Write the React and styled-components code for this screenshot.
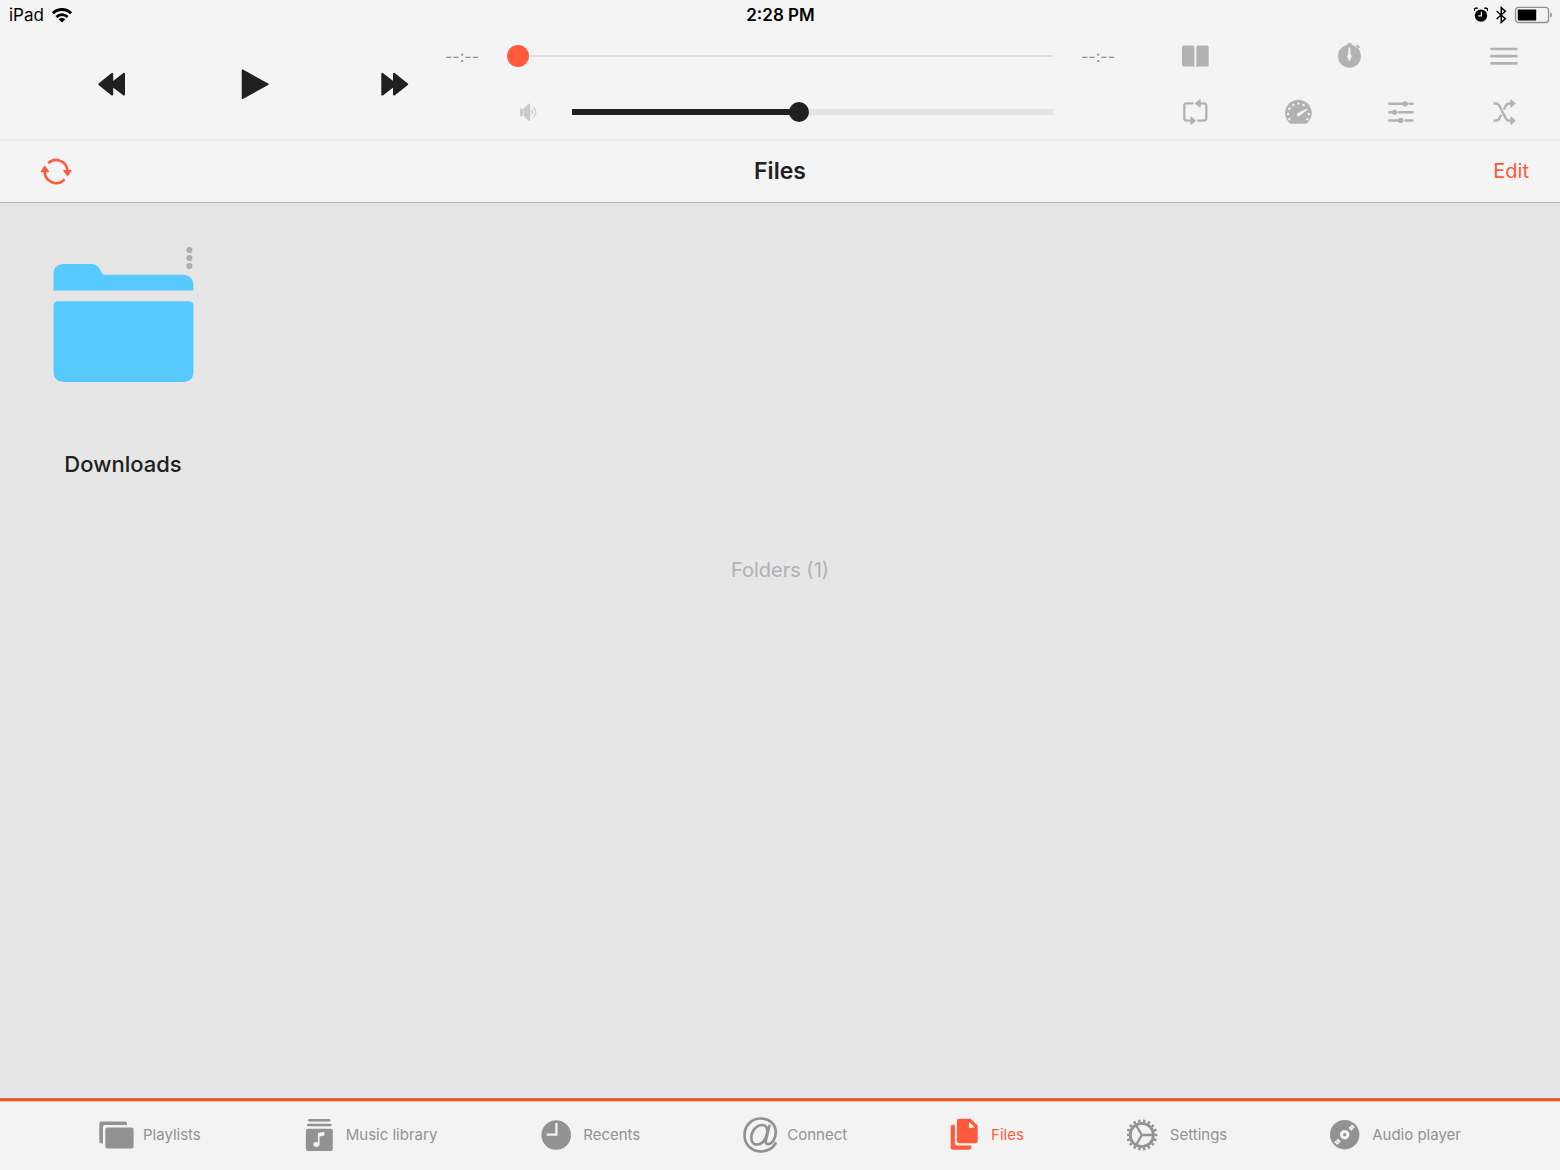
import React, { useState } from "react";
import styled, { createGlobalStyle } from "styled-components";

const GlobalStyle = createGlobalStyle`
  *, *::before, *::after { box-sizing: border-box; }
  body {
    margin: 0;
    background: #e6e6e6;
    color: #202020;
    font-family: Inter, "Liberation Sans", sans-serif;
  }
  svg { display: block; flex: none; }
`;

const Screen = styled.div`
  min-height: 100vh;
  display: flex;
  flex-direction: column;
`;

/* ---------- status bar ---------- */

const StatusBar = styled.div`
  display: grid;
  grid-template-columns: 1fr auto 1fr;
  align-items: center;
  height: 28px;
  padding: 1px 8px 0 9px;
  background: #f4f4f4;
  color: #000;
  font-size: 17px;
  line-height: 28px;
`;

const StatusGroup = styled.div`
  display: flex;
  align-items: center;
  justify-content: ${(p) => (p.$end ? "flex-end" : "flex-start")};
  gap: 7px;
`;

const Clock = styled.time`
  font-weight: 600;
`;

/* ---------- player ---------- */

const Player = styled.section`
  display: grid;
  grid-template-columns: 445px minmax(0, 1fr) 445px;
  height: 112px;
  background: #f4f4f4;
  box-shadow: inset 0 -1px #e9e9e9;
`;

const Transport = styled.div`
  display: flex;
  align-items: center;
  justify-content: space-between;
  padding: 0 33px 0 96px;
`;

const Rows = styled.div`
  display: grid;
  grid-template-rows: 56px 56px;
`;

const SeekRow = styled.div`
  display: flex;
  align-items: center;
  gap: 28px;
`;

const VolumeRow = styled.div`
  display: flex;
  align-items: center;
  gap: 35px;
  padding: 0 61px 0 74px;
`;

const TimeLabel = styled.span`
  width: 34px;
  color: #949494;
  font-size: 16px;
  line-height: 20px;
  white-space: nowrap;
`;

const ToolRow = styled.div`
  display: flex;
  align-items: center;
  justify-content: space-between;
  padding: 0 42px 0 66px;
`;

const IconButton = styled.button`
  display: flex;
  align-items: center;
  justify-content: center;
  flex: none;
  width: ${(p) => p.$width || 28}px;
  padding: 0;
  border: 0;
  background: none;
  color: ${(p) => p.$color || "#b2b2b2"};
  cursor: pointer;
`;

const Slider = styled.input`
  appearance: none;
  flex: 1;
  min-width: 0;
  height: 24px;
  margin: 0;
  background: none;
  cursor: pointer;

  &::-webkit-slider-runnable-track {
    height: ${(p) => p.$track}px;
    border-radius: ${(p) => (p.$rounded ? 1 : 0)}px;
    background: linear-gradient(
      to right,
      ${(p) => p.$color} ${(p) => p.value}%,
      ${(p) => (p.$rounded ? "#dfdfdf" : "#e5e5e6")} ${(p) => p.value}%
    );
  }
  &::-webkit-slider-thumb {
    appearance: none;
    width: ${(p) => p.$thumb}px;
    height: ${(p) => p.$thumb}px;
    margin-top: ${(p) => (p.$track - p.$thumb) / 2}px;
    border-radius: 50%;
    background: ${(p) => p.$color};
  }
`;

/* ---------- title bar ---------- */

const TitleBar = styled.header`
  display: grid;
  grid-template-columns: 1fr auto 1fr;
  align-items: center;
  height: 63px;
  padding: 0 31px;
  background: #f4f4f4;
  border-bottom: 1px solid #b4b4b4;
  box-shadow: inset 0 1px #ededed;
`;

const Title = styled.h1`
  margin: 0;
  font-size: 23px;
  font-weight: 600;
  line-height: 30px;
`;

const EditButton = styled.button`
  justify-self: end;
  padding: 0;
  border: 0;
  background: none;
  color: #ff5b3b;
  font: inherit;
  font-size: 20px;
  line-height: 28px;
  cursor: pointer;
`;

/* ---------- files ---------- */

const Content = styled.main`
  flex: 1;
  padding: 43px 53px;
`;

const FileGrid = styled.div`
  display: grid;
  grid-template-columns: repeat(auto-fill, 140px);
  gap: 40px;
`;

const FileItem = styled.article`
  position: relative;
  display: flex;
  flex-direction: column;
  align-items: center;
  padding-top: 18px;
`;

const MoreButton = styled.button`
  position: absolute;
  top: 0;
  right: 0;
  padding: 0;
  border: 0;
  background: none;
  cursor: pointer;
`;

const FileName = styled.h2`
  margin: 68px 0 0;
  font-size: 22px;
  font-weight: 500;
  line-height: 28px;
`;

const Summary = styled.p`
  margin: 78px 0 0;
  color: #b1b1b6;
  font-size: 20px;
  line-height: 28px;
  text-align: center;
`;

/* ---------- tab bar ---------- */

const TabBar = styled.nav`
  display: flex;
  align-items: center;
  justify-content: space-between;
  height: 72px;
  padding: 0 99px;
  background: #f3f3f3;
  border-top: 1px solid #c8755a;
  box-shadow: inset 0 2px #fa4f10, inset 0 3px #f9cfc1;
`;

const Tab = styled.button`
  display: flex;
  align-items: center;
  gap: 9px;
  padding: 0;
  border: 0;
  background: none;
  color: ${(p) => (p.$active ? "#ff5b3b" : "#929292")};
  font: inherit;
  font-size: 15px;
  line-height: 20px;
  white-space: nowrap;
  cursor: pointer;
`;

/* ---------- drawings ---------- */

const WifiIcon = () => (
  <svg width="22" height="16" viewBox="0 0 22 16" fill="none" stroke="#000" strokeWidth="2.8">
    <path d="M1.9 6.2a13 13 0 0 1 18.2 0" />
    <path d="M5.4 9.9a8.2 8.2 0 0 1 11.2 0" />
    <path d="M11 15.4 7.700 12.300a4.800 4.800 0 0 1 6.600 0z" fill="#000" stroke="none" />
  </svg>
);

const AlarmIcon = () => (
  <svg width="14" height="16" viewBox="0 0 14 16">
    <circle cx="7" cy="8.600" r="6.200" />
    <path d="M.5 4A2 2 0 0 1 3.600 1.600M13.500 4a2 2 0 0 0-3.100-2.400" stroke="#000" strokeWidth="1.400" fill="none" />
    <path d="M7.400 4.800v4.100H4.200" fill="none" stroke="#f4f4f4" strokeWidth="1.200" />
  </svg>
);

const BluetoothIcon = () => (
  <svg width="12" height="18" viewBox="0 0 12 18" fill="none" stroke="#000" strokeWidth="1.500">
    <path d="M1.600 5 10.300 12.700 6.300 16.400V1.600l4 3.700L1.600 13" />
  </svg>
);

const BatteryIcon = () => (
  <svg width="38" height="18" viewBox="0 0 38 18">
    <rect x="1.500" y="1.300" width="33" height="15.200" rx="3" fill="none" stroke="#8f8f8f" strokeWidth="1.300" />
    <rect x="3.800" y="3.600" width="18.400" height="10.800" rx=".6" />
    <path d="M36.200 6.200c2.300.9 2.300 4.600 0 5.500z" fill="#8f8f8f" />
  </svg>
);

const RewindIcon = () => (
  <svg width="32" height="32" viewBox="0 0 32 32" fill="currentColor" stroke="currentColor" strokeWidth="2" strokeLinejoin="round">
    <path d="M3.200 16.200 16.200 5.800v20.800zM14.500 16.200 28 5.800v20.800z" />
  </svg>
);

const PlayIcon = () => (
  <svg width="32" height="32" viewBox="0 0 32 32" fill="currentColor" stroke="currentColor" strokeWidth="1.600" strokeLinejoin="round">
    <path d="M4.500 2.200v28L29.800 16.200z" />
  </svg>
);

const ForwardIcon = () => (
  <svg width="32" height="32" viewBox="0 0 32 32" fill="currentColor" stroke="currentColor" strokeWidth="2" strokeLinejoin="round">
    <path d="M27.200 16.200 14 5.800v20.800zM15.800 16.200 2.300 5.800v20.800z" />
  </svg>
);

const SpeakerIcon = () => (
  <svg width="18" height="18" viewBox="0 0 18 18" fill="#c9c9c9">
    <path d="M1 5.400h2.900v7.900H1zM4.500 5.600 9.400 1q1.900-1.200 1.900.8v15q0 1.800-1.900.6l-4.900-4.600z" />
    <path d="M12.700 7q1.800 2.200 0 4.600M14.400 4.300q5 4.900 0 10" fill="none" stroke="#c9c9c9" strokeWidth="1.200" />
  </svg>
);

const BookIcon = () => (
  <svg width="28" height="28" viewBox="0 0 28 28" fill="currentColor">
    <path d="M2.800 3.600H12q1.400 0 1.400 1.700v20.200q-.4-.9-1.500-.9H2.600Q1 24.600 1 23V5.400q0-1.800 1.800-1.800zM25.900 3.600h-9q-1.500 0-1.500 1.700v20.200q.4-.9 1.600-.9h9.100q1.600 0 1.600-1.600V5.400q0-1.800-1.800-1.800z" />
  </svg>
);

const TimerIcon = () => (
  <svg width="28" height="28" viewBox="0 0 28 28" fill="currentColor">
    <circle cx="13.400" cy="14.200" r="11.500" />
    <path d="M10.800 2.800q0-1.900 2.600-1.900T16 2.800v1h-5.200z" />
    <path d="m21.200 3.600 1.600 1.600" stroke="currentColor" strokeWidth="2" strokeLinecap="round" />
    <path d="M12.600 5.600h1.600l.5 7q1.400 1.200.9 2.700l-1.100 1.100-.2 2.400h-1.800l-.2-2.400-1.100-1.100q-.5-1.500.9-2.700z" fill="#f4f4f4" />
  </svg>
);

const MenuIcon = () => (
  <svg width="28" height="28" viewBox="0 0 28 28" stroke="currentColor" strokeWidth="2.700" strokeLinecap="round">
    <path d="M1.500 7h24.900M1.500 14.200h24.900M1.500 21.300h24.900" />
  </svg>
);

const RepeatIcon = () => (
  <svg width="28" height="28" viewBox="0 0 28 28" fill="none" stroke="currentColor" strokeWidth="2.300">
    <path d="M12.600 5.400H5.600q-2.300 0-2.300 2.300v12.600q0 2.300 2.300 2.300h4M18 5.400h5q2.300 0 2.300 2.300v12.600q0 2.300-2.300 2.300h-6.700" />
    <path d="M14.800 5.400 19 2v6.800zM14.200 22.600 10 19.200V26z" fill="currentColor" strokeWidth="1.400" strokeLinejoin="round" />
  </svg>
);

const GAUGE_DOTS = [-210, -180, -150, -120, -90, -60, 0, 30];

const GaugeIcon = () => (
  <svg width="28" height="28" viewBox="0 0 28 28">
    <path d="M6.400 25.700A13.300 13.300 0 1 1 22.400 25.700z" fill="currentColor" />
    {GAUGE_DOTS.map((deg) => (
      <circle
        key={deg}
        cx={14.4 + 10.4 * Math.cos((deg * Math.PI) / 180)}
        cy={16 + 10.4 * Math.sin((deg * Math.PI) / 180)}
        r="1.200"
        fill="#f4f4f4"
      />
    ))}
    <path d="M22.900 10.600q.8.500.2 1.300l-6.500 5.300q-2.400 1.900-3.600.6-1.100-2 1.700-3.200z" fill="#f4f4f4" />
  </svg>
);

const SlidersIcon = () => (
  <svg width="28" height="28" viewBox="0 0 28 28" fill="currentColor" stroke="currentColor" strokeWidth="2.500" strokeLinecap="round">
    <path d="M2.200 5.800h18M22.900 5.800h2.600M2.200 14.300h7M12.300 14.300h13.200M2.200 22.400h13M18.600 22.400h6.900" />
    <g stroke="none">
      <circle cx="18" cy="5.800" r="2.600" />
      <circle cx="7.700" cy="14.300" r="2.600" />
      <circle cx="13.700" cy="22.400" r="2.600" />
    </g>
  </svg>
);

const ShuffleIcon = () => (
  <svg width="28" height="28" viewBox="0 0 28 28" fill="none" stroke="currentColor" strokeWidth="2.300">
    <path d="M3.400 5.500h2.400q2.600 0 4 3l5.600 11.200q1.400 3 4 3h2.400M3.400 22.700h2.400q2.600 0 4-3l1.500-3M13.800 11.600l1.600-3.100q1.400-3 4-3h2.400" />
    <path d="M21 2.200v6.600l3.800-3.300zM21 19.400V26l3.800-3.300z" fill="currentColor" strokeWidth="1.400" strokeLinejoin="round" />
  </svg>
);

const RefreshIcon = () => (
  <svg width="32" height="32" viewBox="0 0 32 32" fill="none" stroke="currentColor" strokeWidth="2.600">
    <path d="M8.200 8.100A11.500 11.500 0 0 1 27.500 16M24.600 24.400A11.500 11.500 0 0 1 4.700 16.500" />
    <path d="M23.800 15.500h7.300l-3.600 5.200zM1.300 16.600h7.200L4.800 11.400z" fill="currentColor" strokeWidth="1.200" strokeLinejoin="round" />
  </svg>
);

const MoreIcon = () => (
  <svg width="8" height="24" viewBox="0 0 8 24" fill="#aeaeae">
    <circle cx="4.400" cy="4" r="3.100" />
    <circle cx="4.400" cy="12" r="3.100" />
    <circle cx="4.400" cy="20" r="3.100" />
  </svg>
);

const FolderIcon = () => (
  <svg width="141" height="118" viewBox="0 0 141 118" fill="#58c9fd">
    <path d="M.5 26.600V10.500Q.5 0 11 0H37.500c5 0 7 2 9 4.800L50.300 10.700H130C136.500 10.700 140.500 15.500 140.500 22v4.600z" />
    <path d="M5.500 37.300H135.500Q140.500 37.300 140.500 42.300V107Q140.500 118 129.500 118H11.500Q.5 118 .5 107V42.300Q.5 37.300 5.500 37.300z" />
  </svg>
);

const PlaylistsIcon = () => (
  <svg width="35" height="36" viewBox="0 0 35 36" fill="currentColor">
    <path d="M28 8V6.700Q28 4.500 25.800 4.500H2.600Q.3 4.500.3 6.800V24.200Q.3 26.400 2.500 26.400H3.900V10.400Q3.900 8 6.300 8z" />
    <rect x="6.300" y="10.500" width="28.300" height="21" rx="2.200" />
  </svg>
);

const LibraryIcon = () => (
  <svg width="33" height="36" viewBox="-1 0 33 36" fill="currentColor">
    <rect x="3" y="2" width="22.400" height="2.500" rx="1.200" />
    <rect x="2" y="6.800" width="24.600" height="2.500" rx="1.200" />
    <rect x=".9" y="11.700" width="26.900" height="22.300" rx="2" />
    <ellipse cx="11.400" cy="27.400" rx="3" ry="2.400" fill="#f3f3f3" />
    <path d="M12.900 27.400V17q0-1 1-1.200l5.500-1V18.600l-4.900 1V27.400z" fill="#f3f3f3" />
  </svg>
);

const RecentsIcon = () => (
  <svg width="34" height="36" viewBox="-1 0 34 36" fill="none">
    <circle cx="15.200" cy="18" r="14.800" fill="currentColor" />
    <path d="M15.400 6V17.700H5.700" stroke="#f3f3f3" strokeWidth="2.200" />
  </svg>
);

const ConnectIcon = () => (
  <svg width="35" height="36" viewBox="0 0 35 36" fill="none" stroke="currentColor" strokeWidth="2.700" strokeLinecap="round">
    <path d="M32.500 26.500C29.500 31.500 24.500 34.400 18 34.400C8.300 34.400 1.500 27.500 1.500 18C1.500 8.500 8.500 1.500 17.700 1.500C26.800 1.500 32.800 7.500 32.800 15.200C32.800 22 28.600 27.200 25.200 27.200C22.800 27.200 22.400 25.200 23 22.600L26.400 8.800" />
    <path d="M18.900 8C13 8 8.300 14.800 8.300 20.800C8.300 25 10.600 27.700 14 27.700C19.500 27.700 24.300 20.500 24.300 14.200C24.300 10.400 22.400 8 18.900 8z" />
  </svg>
);

const FilesIcon = () => (
  <svg width="32" height="36" viewBox="0 0 32 36" fill="currentColor">
    <path
      fillRule="evenodd"
      d="M9 1.700H20.500L27.700 8.500V24.200Q27.700 26.300 25.600 26.300H9Q6.900 26.300 6.900 24.200V3.800Q6.900 1.700 9 1.700zM19 4.700V10.700H25z"
    />
    <path d="M4.900 7.800V26.300Q4.900 28.400 7 28.400H21.300V30.500Q21.300 32.700 19.100 32.700H2.900Q.7 32.700.7 30.500V10Q.7 7.800 2.900 7.800z" />
  </svg>
);

const SettingsIcon = () => (
  <svg width="34" height="36" viewBox="1 0 34 36" fill="none" stroke="currentColor">
    <circle cx="15.800" cy="18" r="14.200" strokeWidth="2.800" pathLength="72" strokeDasharray="2 2" strokeDashoffset="1" />
    <circle cx="15.800" cy="18" r="11.600" strokeWidth="2.900" />
    <path d="M15.800 18H26.500M15.800 18 10.400 8.600M15.800 18 10.400 27.400" strokeWidth="2.300" />
  </svg>
);

const DiscIcon = () => (
  <svg width="33" height="36" viewBox="0 0 33 36" fill="none">
    <circle cx="14.700" cy="17.700" r="14.700" fill="currentColor" />
    <circle cx="14.700" cy="17.700" r="3.200" stroke="#f3f3f3" strokeWidth="3.200" />
    <path d="m20 12.400 3.600-3.600M9.400 23l-3.600 3.600" stroke="#f3f3f3" strokeWidth="4" />
    <path d="m21 9.500 3.200 3.200M5.300 22.800l3.200 3.200" stroke="currentColor" strokeWidth=".6" />
  </svg>
);

const TABS = [
  { label: "Playlists", Icon: PlaylistsIcon },
  { label: "Music library", Icon: LibraryIcon },
  { label: "Recents", Icon: RecentsIcon },
  { label: "Connect", Icon: ConnectIcon },
  { label: "Files", Icon: FilesIcon },
  { label: "Settings", Icon: SettingsIcon },
  { label: "Audio player", Icon: DiscIcon },
];

export default function App() {
  const [seek, setSeek] = useState(0);
  const [volume, setVolume] = useState(47);
  const [active, setActive] = useState("Files");

  return (
    <Screen>
      <GlobalStyle />

      <StatusBar>
        <StatusGroup>
          <span>iPad</span>
          <WifiIcon />
        </StatusGroup>
        <Clock>2:28 PM</Clock>
        <StatusGroup $end>
          <AlarmIcon />
          <BluetoothIcon />
          <BatteryIcon />
        </StatusGroup>
      </StatusBar>

      <Player aria-label="Player">
        <Transport>
          <IconButton aria-label="Previous" $width={32} $color="#202020"><RewindIcon /></IconButton>
          <IconButton aria-label="Play" $width={32} $color="#202020"><PlayIcon /></IconButton>
          <IconButton aria-label="Next" $width={32} $color="#202020"><ForwardIcon /></IconButton>
        </Transport>

        <Rows>
          <SeekRow>
            <TimeLabel>--:--</TimeLabel>
            <Slider
              type="range"
              aria-label="Position"
              value={seek}
              onChange={(e) => setSeek(Number(e.target.value))}
              $track={2}
              $thumb={22}
              $rounded
              $color="#ff5b3b"
            />
            <TimeLabel>--:--</TimeLabel>
          </SeekRow>
          <VolumeRow>
            <SpeakerIcon />
            <Slider
              type="range"
              aria-label="Volume"
              value={volume}
              onChange={(e) => setVolume(Number(e.target.value))}
              $track={6}
              $thumb={20}
              $color="#202020"
            />
          </VolumeRow>
        </Rows>

        <Rows>
          <ToolRow>
            <IconButton aria-label="Bookmarks"><BookIcon /></IconButton>
            <IconButton aria-label="Sleep timer"><TimerIcon /></IconButton>
            <IconButton aria-label="Queue"><MenuIcon /></IconButton>
          </ToolRow>
          <ToolRow>
            <IconButton aria-label="Repeat"><RepeatIcon /></IconButton>
            <IconButton aria-label="Speed"><GaugeIcon /></IconButton>
            <IconButton aria-label="Equalizer"><SlidersIcon /></IconButton>
            <IconButton aria-label="Shuffle"><ShuffleIcon /></IconButton>
          </ToolRow>
        </Rows>
      </Player>

      <TitleBar>
        <IconButton aria-label="Refresh" $width={50} $color="#ff5b3b"><RefreshIcon /></IconButton>
        <Title>Files</Title>
        <EditButton>Edit</EditButton>
      </TitleBar>

      <Content>
        <FileGrid>
          <FileItem>
            <MoreButton aria-label="More options"><MoreIcon /></MoreButton>
            <FolderIcon />
            <FileName>Downloads</FileName>
          </FileItem>
        </FileGrid>
        <Summary>Folders (1)</Summary>
      </Content>

      <TabBar>
        {TABS.map(({ label, Icon }) => (
          <Tab key={label} $active={label === active} onClick={() => setActive(label)}>
            <Icon />
            {label}
          </Tab>
        ))}
      </TabBar>
    </Screen>
  );
}
